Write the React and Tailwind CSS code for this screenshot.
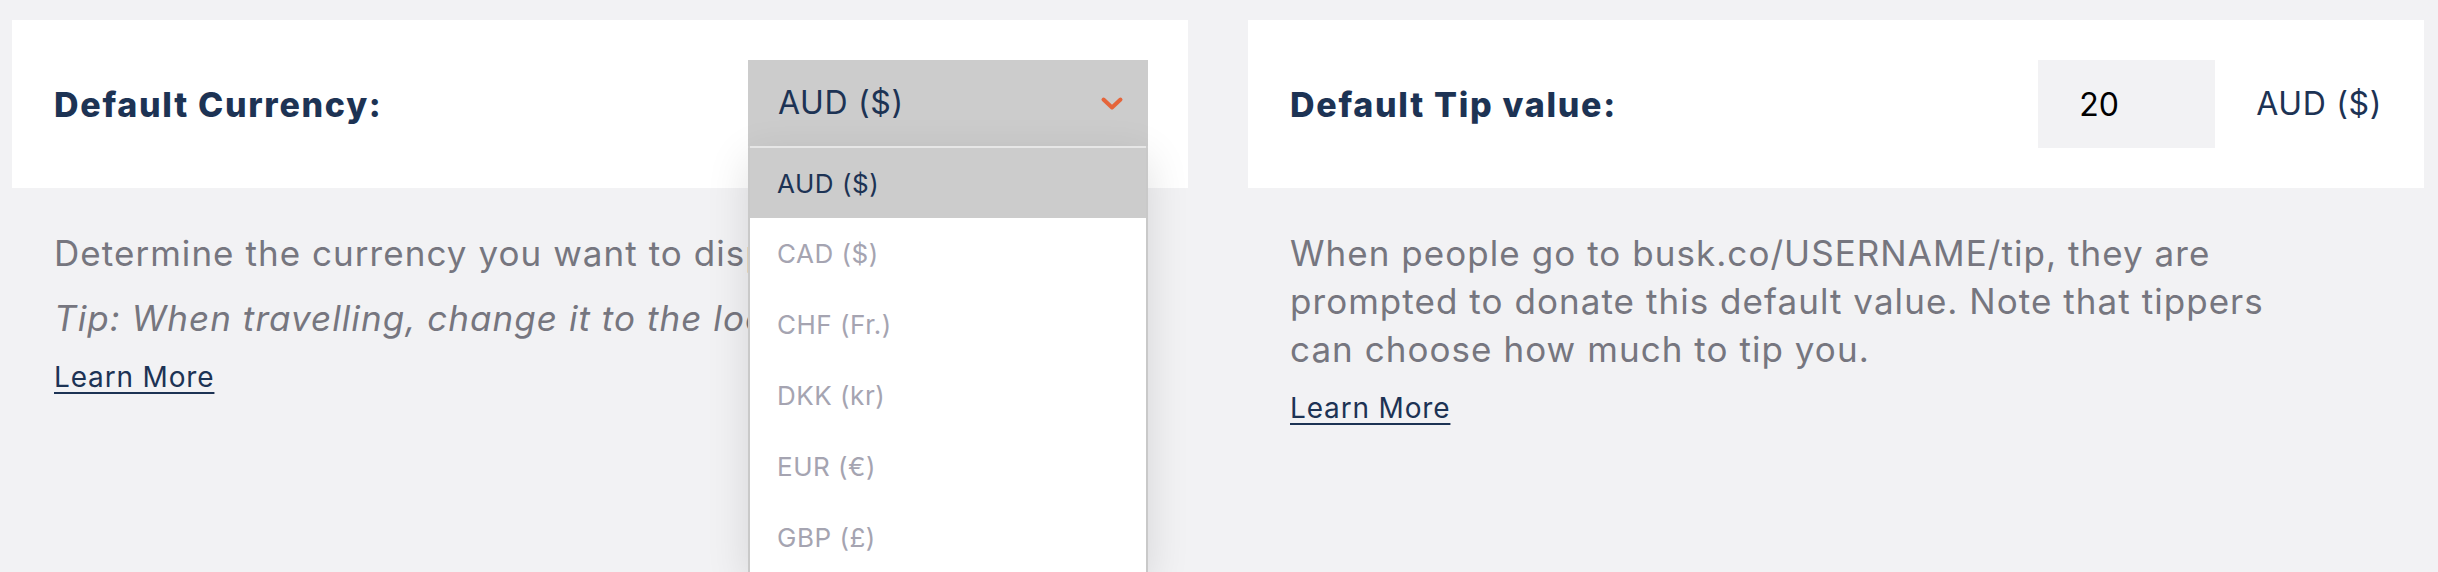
import React from "react";

const currencies = ["AUD ($)", "CAD ($)", "CHF (Fr.)", "DKK (kr)", "EUR (€)", "GBP (£)"];

function Chevron() {
  return (
    <svg width="24" height="15" viewBox="0 0 24 15" fill="none">
      <path
        d="M3.5 3.5 L12 11.5 L20.5 3.5"
        stroke="#e5653b"
        strokeWidth="4"
        strokeLinecap="round"
        strokeLinejoin="round"
      />
    </svg>
  );
}

function CurrencySelect() {
  return (
    <div className="relative w-[400px] self-start mt-[40px]">
      <div className="h-[86px] bg-[#cccccc] flex items-center justify-between pl-[30px] pr-[24px] text-[32px] tracking-[0.02em] text-[#1d3354]">
        <span>AUD ($)</span>
        <Chevron />
      </div>
      <div className="absolute left-0 top-full w-full z-10 shadow-[0_12px_40px_rgba(0,0,0,0.12)]">
        <div className="h-[2px] bg-[#cccccc] px-[2px]">
          <div className="h-full bg-[#e6e6e6]" />
        </div>
        <ul className="bg-white border-x-2 border-[#c9c9c9]">
          {currencies.map((c, i) => (
            <li
              key={c}
              className={
                i === 0
                  ? "h-[70px] flex items-center pl-[27px] text-[26px] tracking-[0.02em] text-[#1d3354] bg-[#cccccc]"
                  : "h-[71px] flex items-center pl-[27px] text-[26px] tracking-[0.02em] text-[#a5a4b1]"
              }
            >
              {c}
            </li>
          ))}
        </ul>
      </div>
    </div>
  );
}

export default function App() {
  return (
    <div
      className="min-h-[572px] bg-[#f2f2f4] pt-[20px] pl-[12px] pr-[14px] grid grid-cols-2 gap-x-[60px] items-start overflow-hidden"
      style={{ fontFamily: "Inter, 'Open Sans', sans-serif" }}
    >
      <div>
        <div className="bg-white h-[168px] flex justify-between pl-[42px] pr-[40px]">
          <h2 className="self-center text-[34px] font-extrabold tracking-[0.05em] text-[#1d3354]">Default Currency:</h2>
          <CurrencySelect />
        </div>
        <div className="mt-[41px] px-[42px] text-[35px] leading-[48px] tracking-[0.03em] text-[#76767f]">
          <p>Determine the currency you want to display.</p>
          <p className="italic mt-[17px]">Tip: When travelling, change it to the local one.</p>
          <a href="#" className="inline-block mt-[17px] text-[28px] leading-[36px] tracking-[0.03em] text-[#1d3354] underline decoration-2 underline-offset-[5px]">
            Learn More
          </a>
        </div>
      </div>

      <div>
        <div className="bg-white h-[168px] flex items-center pl-[42px] pr-[42px]">
          <h2 className="flex-1 text-[34px] font-extrabold tracking-[0.05em] text-[#1d3354]">Default Tip value:</h2>
          <input
            defaultValue="20"
            className="w-[177px] h-[88px] bg-[#f2f2f4] pl-[41px] text-[32px] text-black outline-none"
          />
          <span className="ml-[41px] text-[32px] tracking-[0.02em] text-[#1d3354]">AUD ($)</span>
        </div>
        <div className="mt-[41px] px-[42px] text-[35px] leading-[48px] tracking-[0.03em] text-[#76767f]">
          <p>
            When people go to busk.co/USERNAME/tip, they are
            <br />
            prompted to donate this default value. Note that tippers
            <br />
            can choose how much to tip you.
          </p>
          <a href="#" className="inline-block mt-[17px] text-[28px] leading-[36px] tracking-[0.03em] text-[#1d3354] underline decoration-2 underline-offset-[5px]">
            Learn More
          </a>
        </div>
      </div>
    </div>
  );
}
